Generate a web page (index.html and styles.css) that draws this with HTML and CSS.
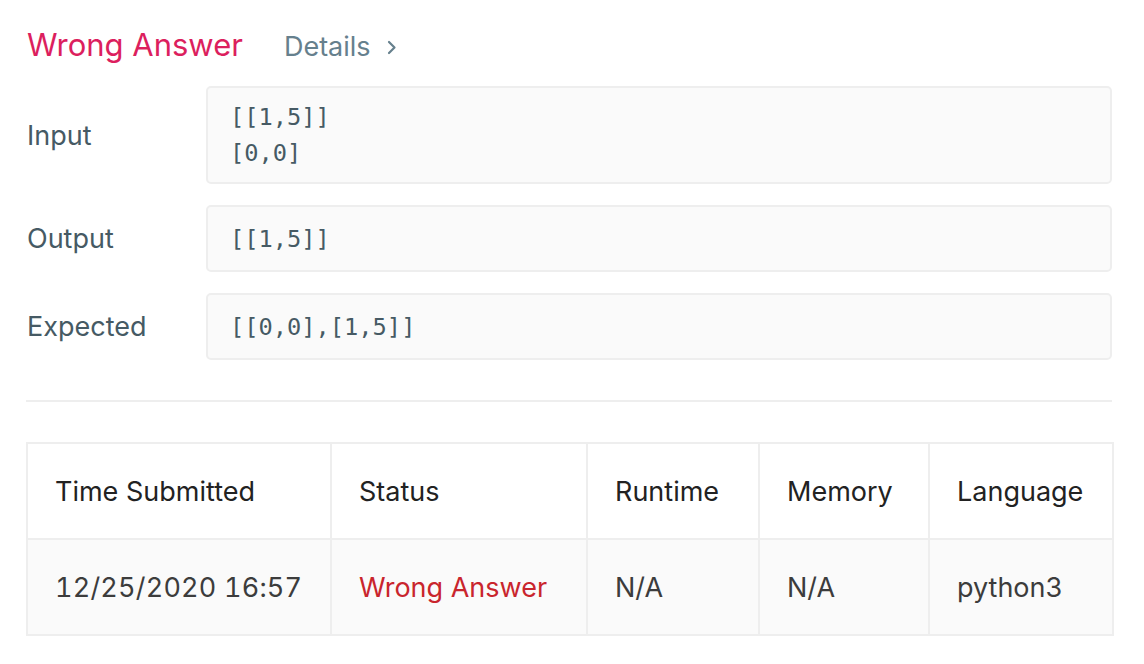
FILE: index.html
```html
<!DOCTYPE html>
<html>
<head>
<meta charset="utf-8">
<link rel="stylesheet" href="styles.css">
</head>
<body>
<div class="page">
  <div class="result-head">
    <span class="verdict">Wrong Answer</span>
    <a class="details">Details <svg class="chev" width="10" height="15" viewBox="0 0 10 15"><path d="M2 2 L7.5 7.5 L2 13" fill="none" stroke="currentColor" stroke-width="2.2" stroke-linecap="round" stroke-linejoin="round"/></svg></a>
  </div>
  <div class="cases">
    <div class="case">
      <div class="label">Input</div>
      <div class="code">[[1,5]]<br>[0,0]</div>
    </div>
    <div class="case">
      <div class="label">Output</div>
      <div class="code">[[1,5]]</div>
    </div>
    <div class="case">
      <div class="label">Expected</div>
      <div class="code">[[0,0],[1,5]]</div>
    </div>
  </div>
  <hr class="divider">
  <table class="subs">
    <thead>
      <tr>
        <th class="c1">Time Submitted</th>
        <th class="c2">Status</th>
        <th class="c3">Runtime</th>
        <th class="c4">Memory</th>
        <th class="c5">Language</th>
      </tr>
    </thead>
    <tbody>
      <tr>
        <td class="num">12/25/2020 16:57</td>
        <td class="wa">Wrong Answer</td>
        <td>N/A</td>
        <td>N/A</td>
        <td>python3</td>
      </tr>
    </tbody>
  </table>
</div>
</body>
</html>
```
FILE: styles.css
```css
* { box-sizing: border-box; }
html, body { margin: 0; padding: 0; background: #fff; }
body { font-family: Inter, "Noto Sans", sans-serif; }
.page { width: 1144px; padding: 26px 32px 0 26px; }
.result-head { display: flex; align-items: baseline; height: 50px; }
.verdict { font-size: 31px; color: #dc1f5e; margin-left: 1px; }
.details { font-size: 27px; color: #66808d; margin-left: 41px; display: inline-flex; align-items: center; gap: 16px; }
.chev { position: relative; top: 1px; }
.cases { display: flex; flex-direction: column; gap: 21px; margin-top: 10px; }
.case { display: grid; grid-template-columns: 180px 1fr; align-items: center; }
.label { font-size: 27px; color: #465a64; padding-left: 1px; }
.code { min-height: 67px; display: flex; flex-direction: column; justify-content: center; background: #fafafa; border: 2px solid #eeeeee; border-radius: 5px; padding: 11px 22px; font-family: "DejaVu Sans Mono", monospace; font-size: 23.7px; line-height: 36px; color: #465a64; }
.divider { border: 0; border-top: 2px solid #eeeeee; margin: 40px 0 40px 0; }
.subs { width: 1086px; border-collapse: collapse; border: 2px solid #eeeeee; table-layout: fixed; }
.subs th, .subs td { border: 2px solid #eeeeee; text-align: left; font-weight: 400; font-size: 27px; padding: 0 0 0 27px; height: 96px; }
.subs th { color: #222; background: #fff; }
.subs td { color: #3c3c3c; background: #fafafa; }
.subs td.num { font-variant-numeric: tabular-nums; letter-spacing: 0.2px; }
.subs td.wa { color: #c9252d; }
.c1 { width: 304px; }
.c2 { width: 256px; }
.c3 { width: 172px; }
.c4 { width: 170px; }
.c5 { width: 184px; }
```
